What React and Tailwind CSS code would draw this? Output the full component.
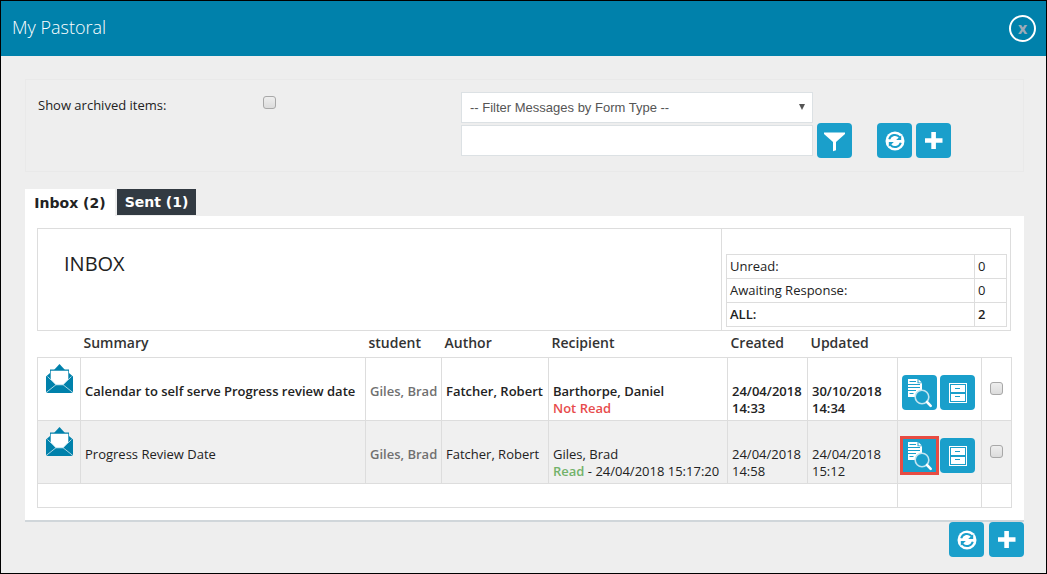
import { useState } from 'react';

const messages = [
    {
        id: 1,
        summary: 'Calendar to self serve Progress review date',
        student: 'Giles, Brad',
        author: 'Fatcher, Robert',
        recipient: 'Barthorpe, Daniel',
        readAt: null,
        created: ['24/04/2018', '14:33'],
        updated: ['30/10/2018', '14:34'],
        unread: true,
        highlighted: false,
    },
    {
        id: 2,
        summary: 'Progress Review Date',
        student: 'Giles, Brad',
        author: 'Fatcher, Robert',
        recipient: 'Giles, Brad',
        readAt: '24/04/2018 15:17:20',
        created: ['24/04/2018', '14:58'],
        updated: ['24/04/2018', '15:12'],
        unread: false,
        highlighted: true,
    },
];

const counts = [
    { label: 'Unread:', value: 0 },
    { label: 'Awaiting Response:', value: 0 },
    { label: 'ALL:', value: 2, bold: true },
];

const FilterIcon = () => (
    <svg width="35" height="35" viewBox="0 0 35 35" fill="#fff" aria-hidden="true">
        <path d="M7 9.5h21v1.5L19 19v8.3l-3 1V19L7 11z" />
    </svg>
);

const RefreshIcon = () => (
    <svg width="35" height="35" viewBox="0 0 35 35" aria-hidden="true">
        <circle cx="18" cy="18" r="9.5" fill="#fff" />
        <path d="M12.2 16.2a6 6 0 0 1 10.4-2" fill="none" stroke="#1a9fcb" strokeWidth="2" />
        <path d="M24.2 12.2v4.8h-5z" fill="#1a9fcb" />
        <path d="M23.8 19.8a6 6 0 0 1-10.4 2" fill="none" stroke="#1a9fcb" strokeWidth="2" />
        <path d="M11.8 23.8V19h5z" fill="#1a9fcb" />
    </svg>
);

const PlusIcon = () => (
    <svg width="35" height="35" viewBox="0 0 35 35" fill="#fff" aria-hidden="true">
        <path d="M15.3 9h4.6v6.3h6.6v4.4h-6.6V26h-4.6v-6.3H9v-4.4h6.3z" />
    </svg>
);

const ViewIcon = () => (
    <svg width="35" height="35" viewBox="0 0 35 35" aria-hidden="true">
        <path d="M6 4h9.5v4.3H20V15a7 7 0 0 0-6.5 7H6z" fill="#fff" />
        <path d="M16.5 4.2 19.8 7.4h-3.3z" fill="#fff" />
        <path d="M7.5 6.5H14M6 9.5h12M6 12.5h12M6 15.5h8M7.5 18.5h4" stroke="#1a9fcb" strokeWidth="1" />
        <circle cx="20" cy="22" r="6.8" fill="#1a9fcb" stroke="#c3e5f1" strokeWidth="1.6" />
        <path d="M25 27l3.7 3.8" stroke="#fff" strokeWidth="2.6" strokeLinecap="round" />
    </svg>
);

const ArchiveIcon = () => (
    <svg width="35" height="35" viewBox="0 0 35 35" aria-hidden="true">
        <rect x="9.5" y="8.5" width="17" height="19" fill="none" stroke="#fff" />
        <rect x="11" y="10" width="14" height="7" fill="#fff" />
        <rect x="11" y="19" width="14" height="7" fill="#fff" />
        <path d="M15 13.5h5M15 21.5h5" stroke="#1a9fcb" strokeWidth="1" />
    </svg>
);

const EnvelopeIcon = () => (
    <svg width="27" height="29" viewBox="0 0 27 29" className="mx-auto" aria-hidden="true">
        <path d="M8 6 13.5 0 19 6z" fill="#0081ab" />
        <path d="M0 12.5 4 9V5.5h19V9l4 3.5V27a2 2 0 0 1-2 2H2a2 2 0 0 1-2-2z" fill="#0081ab" />
        <path d="M4.7 6.7h17.6v8.6L17 21H10l-5.3-5.7z" fill="#fff" />
        <path d="M.8 28 10 20.7M26.2 28 17 20.7M1.5 12.5l8.5 8.3h7l8.5-8.3" fill="none" stroke="#b9dfeb" strokeWidth="0.9" />
    </svg>
);

const IconButton = ({ label, highlighted, children }) => (
    <button type="button" aria-label={label} title={label} className="relative block size-[35px] shrink-0 rounded bg-[#1a9fcb]">
        {children}
        {highlighted && <span className="absolute -inset-0.5 border-3 border-[#e74c43]" />}
    </button>
);

const Checkbox = (props) => (
    <input
        type="checkbox"
        className="block size-[13px] appearance-none rounded-[3px] border border-[#a8a8a8] bg-linear-to-b from-[#eeeeee] to-[#dcdcdc] checked:bg-[#1a9fcb]"
        {...props}
    />
);

const MessageRow = ({ message }) => {
    const cell = 'border border-[#dddddd] pt-[25px] pb-[3px] pl-1';

    return (
        <tr className={`h-[63px] align-top ${message.unread ? 'bg-white font-semibold' : 'bg-[#f0f0f0]'}`}>
            <td className="border border-[#dddddd] pt-[6px]"><EnvelopeIcon /></td>
            <td className={cell}>{message.summary}</td>
            <td className={`${cell} font-semibold text-[#707070]`}>{message.student}</td>
            <td className={cell}>{message.author}</td>
            <td className={cell}>
                {message.recipient}
                <br />
                {message.readAt ? (
                    <><span className="font-semibold text-[#72b26a]">Read</span> - {message.readAt}</>
                ) : (
                    <span className="text-[#e74c4c]">Not Read</span>
                )}
            </td>
            <td className={cell}>{message.created[0]}<br />{message.created[1]}</td>
            <td className={cell}>{message.updated[0]}<br />{message.updated[1]}</td>
            <td className="border border-[#dddddd] pt-[17px] pl-1">
                <div className="flex gap-[3px]">
                    <IconButton label="View" highlighted={message.highlighted}><ViewIcon /></IconButton>
                    <IconButton label="Archive"><ArchiveIcon /></IconButton>
                </div>
            </td>
            <td className="border border-[#dddddd] pt-6 pl-2">
                <Checkbox aria-label={`Select ${message.summary}`} />
            </td>
        </tr>
    );
};

const App = () => {
    const [search, setSearch] = useState('');

    return (
        <div className="min-h-screen border border-black bg-[#eeeeee] font-['Open_Sans',sans-serif] text-[13px] leading-[17px] text-[#222222]">
            <header className="flex h-[55px] items-center justify-between bg-[#0081ab] pr-[10px] pl-[11px]">
                <h1 className="pb-[3px] text-lg font-light text-white">My Pastoral</h1>
                <button type="button" aria-label="Close" className="flex size-[27px] items-center justify-center rounded-full border-2 border-white pb-px text-base font-bold text-[#9cabb8]">
                    x
                </button>
            </header>

            <main className="pt-[23px] pr-[22px] pl-6">
                <form className="flex h-[93px] items-start border border-[#e9e9e9] pt-3 pl-3" onSubmit={(e) => e.preventDefault()}>
                    <label htmlFor="archived" className="w-[225px] pt-[5px]">Show archived items:</label>
                    <div className="w-[198px] pt-1"><Checkbox id="archived" /></div>
                    <div className="relative flex w-[352px] flex-col gap-0.5 font-['Liberation_Sans',sans-serif] text-[13px] text-[#555555]">
                        <select aria-label="Form type" className="h-[31px] appearance-none border border-[#dce1e4] bg-white px-2">
                            <option>-- Filter Messages by Form Type --</option>
                        </select>
                        <svg className="pointer-events-none absolute top-3 right-2" width="6" height="6" viewBox="0 0 6 6" aria-hidden="true">
                            <path d="M0 0h6L3 6z" fill="#555" />
                        </svg>
                        <input
                            type="text"
                            aria-label="Search messages"
                            value={search}
                            onChange={(e) => setSearch(e.target.value)}
                            className="h-[31px] border border-[#dce1e4] bg-white px-2"
                        />
                    </div>
                    <div className="flex gap-1 pt-[31px] pl-1">
                        <IconButton label="Filter"><FilterIcon /></IconButton>
                        <div className="flex gap-1 pl-[21px]">
                            <IconButton label="Refresh"><RefreshIcon /></IconButton>
                            <IconButton label="New message"><PlusIcon /></IconButton>
                        </div>
                    </div>
                </form>

                <nav className="mt-[17px] flex items-start gap-0.5 font-['DejaVu_Sans',sans-serif] text-sm font-bold">
                    <button type="button" className="h-[27px] w-[90px] bg-white">Inbox (2)</button>
                    <button type="button" className="h-[26px] w-[79px] bg-[#323a42] text-white">Sent (1)</button>
                </nav>

                <section className="border-b-2 border-[#d0d6da] bg-white p-3">
                    <div className="mr-px flex h-[103px] border border-[#dddddd]">
                        <h2 className="flex-1 pt-[23px] pl-[26px] text-xl leading-6 font-medium">INBOX</h2>
                        <div className="w-[289px] border-l border-[#dddddd] pt-[25px] pr-[3px] pl-1">
                            <table className="w-full table-fixed border-collapse">
                                <tbody>
                                    {counts.map(c => (
                                        <tr key={c.label} className={`h-6 ${c.bold ? 'font-semibold' : ''}`}>
                                            <th scope="row" className={`border border-[#dddddd] pl-[3px] text-left ${c.bold ? 'font-semibold' : 'font-normal'}`}>{c.label}</th>
                                            <td className="w-8 border border-[#dddddd] pl-[3px]">{c.value}</td>
                                        </tr>
                                    ))}
                                </tbody>
                            </table>
                        </div>
                    </div>

                    <table className="w-full table-fixed border-collapse">
                        <colgroup>
                            <col className="w-[43px]" />
                            <col />
                            <col className="w-[76px]" />
                            <col className="w-[107px]" />
                            <col className="w-[179px]" />
                            <col className="w-[80px]" />
                            <col className="w-[90px]" />
                            <col className="w-[84px]" />
                            <col className="w-[30px]" />
                        </colgroup>
                        <thead>
                            <tr className="h-[26px] text-left text-sm text-[#333333] *:pb-0.5 *:pl-[3px] *:font-semibold">
                                <th aria-label="Status" />
                                <th>Summary</th>
                                <th>student</th>
                                <th>Author</th>
                                <th>Recipient</th>
                                <th>Created</th>
                                <th>Updated</th>
                                <th aria-label="Actions" />
                                <th aria-label="Select" />
                            </tr>
                        </thead>
                        <tbody>
                            {messages.map(m => <MessageRow key={m.id} message={m} />)}
                            <tr className="h-6">
                                <td colSpan={7} className="border border-[#dddddd]" />
                                <td className="border border-[#dddddd]" />
                                <td className="border border-[#dddddd]" />
                            </tr>
                        </tbody>
                    </table>
                </section>

                <div className="flex justify-end gap-[5px] pb-3">
                    <IconButton label="Refresh"><RefreshIcon /></IconButton>
                    <IconButton label="New message"><PlusIcon /></IconButton>
                </div>
            </main>
        </div>
    );
};

export default App;
